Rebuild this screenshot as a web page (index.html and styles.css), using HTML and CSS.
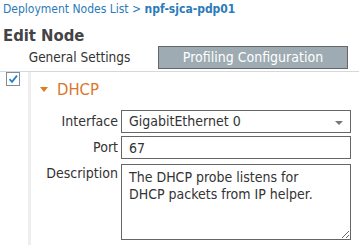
FILE: index.html
```html
<html>

<head>
  <meta name="viewport" content="width=device-width, initial-scale=1.0">
  <link rel="stylesheet" href="styles.css">
</head>

<body>
  <div class="crumbs">
    <a>Deployment Nodes List</a> &gt; <b>npf-sjca-pdp01</b>
  </div>
  <h1>Edit Node</h1>
  <div class="tabs">
    <a class="tab">General Settings</a>
    <a class="tab select">Profiling Configuration</a>
  </div>
  <div class="probe">
    <span class="check">
      <svg width="14" height="14" viewBox="0 0 14 14">
        <rect x="0.5" y="0.5" width="13" height="13" fill="#fff" stroke="#7b8c9c" />
        <path d="M3.5 7.2 L6 9.8 L11 3.6" fill="none" stroke="#2a7fc4" stroke-width="1.8" />
      </svg>
    </span>
    <div class="body">
      <h2><i class="caret"></i>DHCP</h2>
      <div class="form">
        <label>Interface</label>
        <div class="select">GigabitEthernet 0<i class="arrow"></i></div>
        <label>Port</label>
        <input value="67">
        <label class="top">Description</label>
        <textarea>The DHCP probe listens for DHCP packets from IP helper.</textarea>
      </div>
    </div>
  </div>
</body>

</html>
```

FILE: styles.css
```css
html,
body {
  margin: 0;
  padding: 0;
  background: #fff;
  overflow: hidden;
}

body {
  font-family: "DejaVu Sans Condensed", "DejaVu Sans", sans-serif;
  font-stretch: condensed;
  font-size: 14px;
  color: #333;
}

.crumbs {
  padding: 1px 3px 0;
  height: 17px;
  line-height: 17px;
  font-size: 12px;
  color: #2b7bb9;
}

.crumbs b {
  font-weight: bold;
}

h1 {
  margin: 0;
  padding: 8px 3px 0;
  height: 20px;
  line-height: 20px;
  font-size: 16.5px;
  font-weight: bold;
  color: #444;
}

.tabs {
  display: flex;
  gap: 2px;
  padding: 0 0 2px 3px;
  border-bottom: 1px solid #d4d8db;
}

.tab {
  flex-shrink: 0;
  white-space: nowrap;
  width: 153px;
  text-align: center;
  height: 23px;
  line-height: 23px;
  font-size: 13.5px;
  color: #333;
}

.tab.select {
  width: 190px;
  background: #9eabb3;
  color: #fff;
}

.probe {
  display: flex;
}

.check {
  width: 14px;
  height: 14px;
  margin: 0 8px 0 6px;
}

.check svg {
  display: block;
}

.body {
  border-left: 3px solid #eee;
  padding: 7px 0 8px 9px;
  height: 158px;
}

h2 {
  display: flex;
  align-items: center;
  margin: 0 0 11px;
  height: 20px;
  font-size: 16.5px;
  font-weight: normal;
  color: #d9782c;
}

.caret {
  width: 0;
  height: 0;
  border-left: 4.5px solid transparent;
  border-right: 4.5px solid transparent;
  border-top: 5px solid #e07b25;
  margin-right: 9px;
}

.form {
  display: grid;
  grid-template-columns: 78px 230px;
  column-gap: 3px;
  row-gap: 3px;
}

label {
  text-align: right;
  line-height: 23px;
}

label.top {
  margin-top: 2px;
  line-height: 17px;
  padding-top: 1px;
}

.select,
input,
textarea {
  box-sizing: border-box;
  border: 1px solid #666;
  border-radius: 0;
  outline: none;
  font-family: inherit;
  font-stretch: condensed;
  font-size: 14px;
  color: #333;
  padding: 0 7px;
  width: 230px;
}

.select,
input {
  height: 23px;
  line-height: 21px;
}

.select {
  position: relative;
}

.arrow {
  position: absolute;
  right: 7px;
  top: 10px;
  border-left: 4px solid transparent;
  border-right: 4px solid transparent;
  border-top: 4px solid #777;
}

textarea {
  margin-top: 2px;
  height: 76px;
  padding: 4px 28px 4px 7px;
  line-height: 17px;
  resize: vertical;
}
```
